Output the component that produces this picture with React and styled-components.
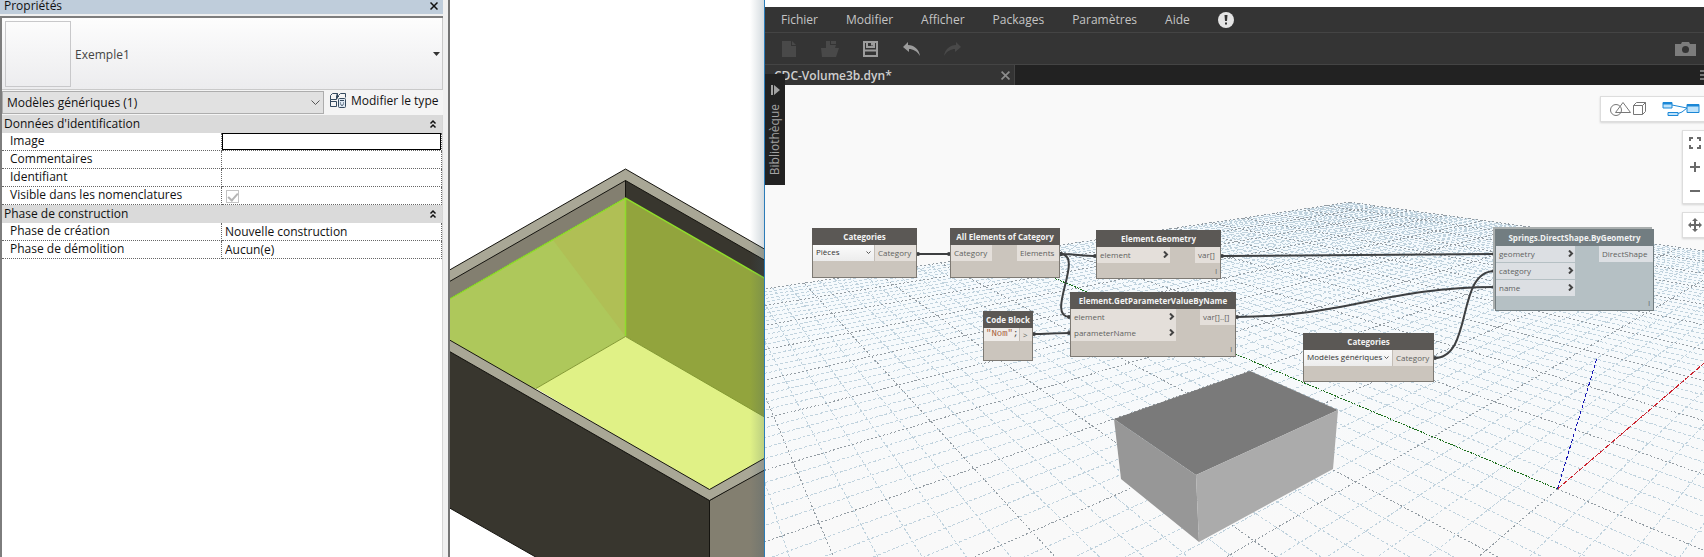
import React from "react";
import styled, { createGlobalStyle } from "styled-components";

const GlobalStyle = createGlobalStyle`
  * {
    box-sizing: border-box;
  }
  body {
    margin: 0;
    background: #fff;
    font-family: "Open Sans", "Noto Sans", sans-serif;
    overflow: hidden;
  }
  button, input, select {
    font: inherit;
    color: inherit;
    margin: 0;
    padding: 0;
    border: 0;
    border-radius: 0;
    background: none;
  }
  svg {
    display: block;
  }
`;

const Desktop = styled.div`
  display: grid;
  grid-template-columns: 450px 314px minmax(0, 1fr);
  min-height: 100vh;
`;

/* ---------- properties palette ---------- */

const Palette = styled.aside`
  display: flex;
  flex-direction: column;
  padding-right: 5px;
  background: #f0f0f0;
  border-right: 2px solid #747474;
  font-size: 12px;
  color: #111;
`;

const PaletteTitle = styled.header`
  display: flex;
  justify-content: space-between;
  align-items: center;
  height: 14px;
  margin-bottom: 2px;
  padding: 0 5px 2px 4px;
  background: #bfcddb;
  line-height: 12px;

  h2 {
    margin: 0;
    font-size: 12px;
    font-weight: 400;
  }
`;

const Frame = styled.div`
  flex: 1;
  background: #fff;
  border: solid #7d7d7d;
  border-width: 2px 0 0 2px;
  box-shadow: inset -1px 0 #d5d5d5;
`;

const TypeSelector = styled.button`
  display: flex;
  align-items: center;
  gap: 4px;
  width: 100%;
  height: 72px;
  padding: 1px 2px 0 3px;
  background: linear-gradient(#fdfdfd, #ececee);
  border: solid #c9c9c9;
  border-width: 0 1px 1px 0;
  color: #444;
  text-align: left;

  span {
    flex: 1;
  }
`;

const Thumb = styled.i`
  width: 66px;
  height: 66px;
  border: 1px solid #c8c8ca;
`;

const FilterRow = styled.div`
  display: flex;
  align-items: center;
  height: 25px;
  background: #f4f4f4;
`;

const SelectWrap = styled.div`
  display: grid;
  align-items: center;
  flex: 1;

  select, svg {
    grid-area: 1 / 1;
  }
  select {
    appearance: none;
    width: 100%;
    height: 23px;
    padding-left: 4px;
    background: #e1e1e1;
    border: 1px solid #adadad;
  }
  svg {
    justify-self: end;
    margin-right: 4px;
    pointer-events: none;
  }
`;

const EditType = styled.button`
  display: flex;
  align-items: flex-start;
  gap: 4px;
  width: 119px;
  height: 21px;
  padding-left: 6px;
  white-space: nowrap;
`;

const PropTable = styled.table`
  width: 440px;
  border-collapse: separate;
  border-spacing: 0;
  table-layout: fixed;

  th, td {
    height: 18px;
    padding: 0;
    font-weight: 400;
    line-height: 16px;
    text-align: left;
  }
`;

const GroupButton = styled.button`
  display: flex;
  justify-content: space-between;
  align-items: center;
  width: 100%;
  height: 18px;
  padding: 0 5px 0 2px;
  background: #dadada;
`;

const PropRow = styled.tr`
  th {
    padding-left: 8px;
  }
  th, td {
    border: 1px dotted #666;
    border-width: 0 1px 1px 0;
    vertical-align: top;
  }
`;

const PropInput = styled.input`
  display: block;
  width: 100%;
  height: 17px;
  padding: 0 0 1px 3px;
  outline: ${({ $active }) => ($active ? "1px solid #000" : "none")};
  outline-offset: ${({ $active }) => ($active ? "-1px" : "0")};
`;

const PropCheck = styled.input`
  appearance: none;
  display: block;
  width: 13px;
  height: 13px;
  margin: 3px 0 0 4px;
  border: 1px solid #c4c4c4;

  &:checked::after {
    content: "";
    display: block;
    width: 4px;
    height: 8px;
    margin: 0 auto;
    border: solid #b5b5b5;
    border-width: 0 2px 2px 0;
    transform: rotate(42deg);
  }
`;

const groups = [
  {
    title: "Données d'identification",
    rows: [
      { id: "image", label: "Image", value: "", active: true },
      { id: "comments", label: "Commentaires", value: "" },
      { id: "mark", label: "Identifiant", value: "" },
      { id: "visible", label: "Visible dans les nomenclatures", check: true },
    ],
  },
  {
    title: "Phase de construction",
    rows: [
      { id: "created", label: "Phase de création", value: "Nouvelle construction" },
      { id: "demolished", label: "Phase de démolition", value: "Aucun(e)" },
    ],
  },
];

const CloseIcon = ({ size = 8, width = 2 }) => (
  <svg width={size} height={size} viewBox="0 0 8 8" stroke="currentColor" strokeWidth={width}>
    <path d="M.5 .5l7 7M7.5 .5l-7 7" />
  </svg>
);

const Collapse = () => (
  <svg width="8" height="10" viewBox="0 0 8 10" fill="none" stroke="#111" strokeWidth="1.5">
    <path d="M1.5 4.5L4 2l2.500 2.500M1.500 8.500L4 6l2.500 2.500" />
  </svg>
);

const EditTypeIcon = () => (
  <svg width="17" height="17" viewBox="0 0 17 17" fill="none" stroke="#34495e">
    <path d="M.5 3.500l2-2h5l-1 2v4h-6zM.5 9.500h6v5h-6zM8.500 5V3.500l2-2h5v4M.5 7.500v3M7.500 1.500v5" />
    <rect x="8.500" y="6.500" width="7" height="9" rx="1" fill="#dfe9f3" />
    <path d="M10 8.500h4M10 11h1M13 11h1M10.500 12.500l1.500 1 1.500-1" />
  </svg>
);

const Properties = () => (
  <Palette>
    <PaletteTitle>
      <h2>Propriétés</h2>
      <button aria-label="Fermer">
        <CloseIcon width={1.5} />
      </button>
    </PaletteTitle>
    <Frame>
      <TypeSelector>
        <Thumb />
        <span>Exemple1</span>
        <svg width="7" height="4" viewBox="0 0 7 4">
          <path d="M0 0h7L3.500 4z" fill="#333" />
        </svg>
      </TypeSelector>
      <FilterRow>
        <SelectWrap>
          <select aria-label="Filtre">
            <option>Modèles génériques (1)</option>
          </select>
          <svg width="9" height="6" viewBox="0 0 9 6" fill="none" stroke="#555">
            <path d="M.5 .5l4 4 4-4" />
          </svg>
        </SelectWrap>
        <EditType>
          <EditTypeIcon />
          Modifier le type
        </EditType>
      </FilterRow>
      <PropTable>
        {groups.map((g) => (
          <tbody key={g.title}>
            <tr>
              <th colSpan="2">
                <GroupButton>
                  {g.title}
                  <Collapse />
                </GroupButton>
              </th>
            </tr>
            {g.rows.map((r) => (
              <PropRow key={r.id}>
                <th>
                  <label htmlFor={r.id}>{r.label}</label>
                </th>
                <td>
                  {r.check ? (
                    <PropCheck id={r.id} type="checkbox" defaultChecked disabled />
                  ) : (
                    <PropInput id={r.id} type="text" defaultValue={r.value} $active={r.active} />
                  )}
                </td>
              </PropRow>
            ))}
          </tbody>
        ))}
      </PropTable>
    </Frame>
  </Palette>
);

/* ---------- Revit 3D view ---------- */

const View3D = styled.main`
  position: relative;
  overflow: hidden;
  background: #fff;

  svg {
    position: absolute;
    inset: 0;
  }
  &::after {
    content: "";
    position: absolute;
    inset: 0 0 0 auto;
    width: 14px;
    background: linear-gradient(to right, rgba(60, 90, 110, 0), rgba(60, 90, 110, 0.22));
  }
`;

const Room = () => (
  <View3D>
    <svg width="100%" height="100%">
      <g stroke="#15140f" strokeLinejoin="round">
        <path d="M-10 275.500L175.500 169 330 258v40L175.500 198-10 305z" fill="#a9a796" />
        <path d="M-10 287L175.500 180.500V198L-10 304.500z" fill="#837f70" />
        <path d="M175.500 180.500L330 269v18L175.500 198z" fill="#38362e" />
      </g>
      <path d="M-10 304.500L175.500 198v138.500L80 392-10 345z" fill="#aec85b" />
      <path d="M103 240l72.500-42v138.500z" fill="#b0bf55" />
      <path d="M175.500 198L330 287v140L175.500 336.500z" fill="#92a43d" />
      <path d="M175.500 336.500L330 426v40l-71 25L86 388.500z" fill="#e0f186" />
      <path d="M86 388.500l89.500-52L330 426" fill="none" stroke="#849a32" />
      <path d="M-10 304.500L175.500 198 330 287M175.500 198v138" fill="none" stroke="#8fdc2c" strokeWidth="1.500" />
      <g stroke="#15140f" strokeLinejoin="round">
        <path d="M-10 346L259.500 500.500V656L-10 502.500z" fill="#38362e" />
        <path d="M259.500 500.500L330 460v140h-70.500z" fill="#837f70" />
        <path d="M-10 334.500l269.500 155L330 449.500v12l-70.500 39L-10 346z" fill="#a9a796" />
      </g>
    </svg>
  </View3D>
);

/* ---------- Dynamo window ---------- */

const DynamoWindow = styled.section`
  position: relative;
  display: flex;
  flex-direction: column;
  padding-top: 7px;
  border-left: 1px solid #2b7cb8;
  background: #fff;
  overflow: hidden;
`;

const MenuBar = styled.nav`
  display: flex;
  align-items: center;
  gap: 28px;
  height: 26px;
  padding: 0 16px;
  background: #343434;
  border-bottom: 1px solid #444;
  color: #c4c4c4;
  font-size: 12px;
`;

const Toolbar = styled.div`
  display: flex;
  align-items: center;
  height: 32px;
  padding: 0 8px 0 3px;
  background: #343434;
  border-bottom: 1px solid #444;
`;

const ToolButton = styled.button`
  display: flex;
  justify-content: center;
  width: 41px;
  color: ${({ $off }) => ($off ? "#494949" : "#9c9c9c")};

  &:last-child {
    width: auto;
    margin-left: auto;
    color: #7c7c7c;
  }
`;

const TabBar = styled.div`
  display: flex;
  justify-content: space-between;
  align-items: center;
  height: 20px;
  background: #222;
  color: #777;
`;

const Tab = styled.div`
  display: flex;
  justify-content: space-between;
  align-items: center;
  width: 250px;
  height: 20px;
  padding: 0 4px 0 9px;
  background: #343434;
  border-right: 1px solid #444;
  color: #8c8c8c;
  font-size: 12px;
  font-weight: 600;

  span {
    color: #cfcfcf;
  }
`;

const Library = styled.button`
  position: absolute;
  top: 74px;
  left: 0;
  display: flex;
  flex-direction: column;
  align-items: center;
  gap: 9px;
  width: 20px;
  height: 111px;
  padding-top: 11px;
  background: #222;
  color: #a2a2a2;
  font-size: 12px;
  line-height: 16px;

  span {
    writing-mode: vertical-rl;
    transform: rotate(180deg);
  }
`;

const Canvas = styled.div`
  position: relative;
  flex: 1;
  background: #f9f9f9;
  overflow: hidden;
`;

const Layer = styled.svg`
  position: absolute;
  inset: 0;
`;

const Node = styled.article`
  position: absolute;
  left: ${({ $x }) => $x}px;
  top: ${({ $y }) => $y}px;
  display: flex;
  flex-direction: column;
  width: ${({ $w }) => $w}px;
  height: ${({ $h }) => $h}px;
  background: ${({ $cool }) => ($cool ? "#b5c0c4" : "#cbc5bd")};
  border: 1px solid ${({ $cool }) => ($cool ? "#727d81" : "#7d7973")};
  box-shadow: ${({ $cool }) => ($cool ? "-2px -2px #a9aeae" : "none")};
  color: #5f5f5f;
  font-size: 8px;

  h3 {
    margin: -1px -1px 0;
    background: ${({ $cool }) => ($cool ? "#727d81" : "#5b5855")};
    color: #f3f3f3;
    font-size: 8px;
    font-weight: 700;
    line-height: 17px;
    text-align: center;
    white-space: nowrap;
  }
`;

const NodeBody = styled.div`
  display: flex;
  justify-content: space-between;
  align-items: flex-start;
`;

const Ports = styled.div`
  display: flex;
  flex-direction: column;
  gap: ${({ $gap }) => $gap || 0}px;
  width: ${({ $w }) => $w}px;
`;

const Port = styled.div`
  display: flex;
  justify-content: space-between;
  align-items: center;
  height: ${({ $short }) => ($short ? 13 : 16)}px;
  padding: 0 1px 1px 3px;
  background: ${({ $cool }) => ($cool ? "#dcdfe3" : "#e4dfda")};
  white-space: nowrap;
`;

const Lacing = styled.small`
  margin: auto 3px 1px auto;
  font-size: 7px;
  line-height: 10px;
`;

const NodeSelect = styled(SelectWrap)`
  flex: none;
  width: ${({ $w }) => $w}px;
  color: #333;

  select {
    height: 16px;
    padding: 0 0 2px 3px;
    background: linear-gradient(#fbfbfb, #ececec);
    border: 0;
    border-right: 1px solid #c4beb7;
    line-height: 14px;
  }
`;

const Code = styled.code`
  flex: 1;
  height: 13px;
  padding-left: 2px;
  background: #efece9;
  border-right: 1px solid #c4beb7;
  color: #444;
  font: 9px/12px "Liberation Mono", monospace;

  span {
    color: #a8623c;
  }
`;

const Overlay = styled.div`
  position: absolute;
  top: 11px;
  right: -4px;
  display: flex;
  flex-direction: column;
  align-items: flex-end;
  gap: 8px;
`;

const Group = styled.div`
  display: flex;
  flex-direction: ${({ $column }) => ($column ? "column" : "row")};
  background: #fff;
  border: 1px solid #ddd;
  box-shadow: 0 1px 2px rgba(0, 0, 0, 0.15);
`;

const ViewButton = styled.button`
  display: flex;
  align-items: center;
  justify-content: center;
  width: ${({ $w }) => $w || 24}px;
  height: 24px;
  color: #6a6a6a;

  & + & {
    border-left: ${({ $w }) => ($w ? "1px solid #d5d5d5" : "0")};
  }
`;

// ground plane, seen in perspective: origin and the vanishing points of both axes
const origin = { x: 792.5, y: 404 };
const vanishY = { x: -124, y: 20 };
const vanishX = { x: 1240, y: 20 };
const ky = 0.0314;
const kx = 0.0276;
const extent = 50;

const project = (u, v) => {
  const a = ky * u;
  const b = kx * v;
  const w = 1 + a + b;
  const x = (origin.x + a * vanishY.x + b * vanishX.x) / w;
  const y = (origin.y + a * vanishY.y + b * vanishX.y) / w;
  return `${x.toFixed(1)} ${y.toFixed(1)}`;
};

const gridPath = (major) => {
  let d = "";
  for (let i = -extent; i <= extent; i++) {
    if ((i % 5 === 0) !== major || i === 0) continue;
    // keep only what lies in front of the camera
    const v0 = Math.max(-extent, (-0.7 - ky * i) / kx);
    const u0 = Math.max(-extent, (-0.7 - kx * i) / ky);
    d += `M${project(i, extent)}L${project(i, v0)}`;
    d += `M${project(extent, i)}L${project(u0, i)}`;
  }
  return d;
};

const Ground = () => (
  <Layer width="100%" height="100%">
    <defs>
      <linearGradient id="haze" gradientUnits="userSpaceOnUse" x1="0" y1="110" x2="0" y2="440">
        <stop offset="0" stopColor="#f4fafe" />
        <stop offset="1" stopColor="#f9f9f9" />
      </linearGradient>
    </defs>
    <path
      d={`M${project(50, 50)}L${project(50, -40)}L-200 900L1400 900L${project(-30, 50)}z`}
      fill="url(#haze)"
    />
    <g fill="none" shapeRendering="crispEdges">
      <path d={gridPath(false)} stroke="#c1d3de" strokeDasharray="3 2" />
      <path d={gridPath(true)} stroke="#949da4" strokeDasharray="2 2" />
      <path
        d={`M${project(0, 0)}L${project(0, -22)}M${project(0, 0)}L${project(-18, 0)}`}
        stroke="#949da4"
        strokeDasharray="2 2"
      />
      <path d={`M${project(0, 0)}L${project(50, 0)}`} stroke="#1d701d" strokeDasharray="2 1" />
      <path d={`M${project(0, 0)}L${project(0, 50)}`} stroke="#cc2430" strokeDasharray="6 1" />
      <path d="M792.500 404L832 273" stroke="#1414b4" strokeDasharray="4 2" />
    </g>
    <path d="M349 334l136-48 88 39-142 65z" fill="#7a7a7a" />
    <path d="M349 334l82 56 3 67-78-63z" fill="#979797" />
    <path d="M431 390l142-65-5 59-134 73z" fill="#ababab" />
  </Layer>
);

const wires = [
  [152, 169, 185, 169, 12],
  [295, 169, 331, 171, 12],
  [295, 169, 305, 232, 26],
  [268, 249, 305, 248, 12],
  [456, 171, 730, 169, 90],
  [471, 232, 730, 202, 110],
  [669, 273, 730, 186, 40],
];

const Wires = () => (
  <Layer width="100%" height="100%" fill="none" stroke="#3d3f41" strokeWidth="2">
    {wires.map(([x1, y1, x2, y2, c], i) => (
      <g key={i}>
        <path d={`M${x1} ${y1}C${x1 + c} ${y1} ${x2 - c} ${y2} ${x2} ${y2}`} />
        <circle cx={x1 + 1} cy={y1} r="1" />
        <circle cx={x2 - 1} cy={y2} r="1" />
      </g>
    ))}
  </Layer>
);

const PortArrow = () => (
  <svg width="6" height="7" viewBox="0 0 6 7" fill="none" stroke="#444" strokeWidth="2">
    <path d="M1 .5l3 3-3 3" />
  </svg>
);

const FnNode = ({ title, inputs, output, inW, outW, arrows, lacing, gap, ...box }) => (
  <Node {...box}>
    <h3>{title}</h3>
    <NodeBody>
      <Ports $w={inW} $gap={gap}>
        {inputs.map((name) => (
          <Port key={name} $cool={box.$cool}>
            {name}
            {arrows && <PortArrow />}
          </Port>
        ))}
      </Ports>
      <Ports $w={outW}>
        <Port $cool={box.$cool}>{output}</Port>
      </Ports>
    </NodeBody>
    {lacing && <Lacing>l</Lacing>}
  </Node>
);

const CategoryNode = ({ value, selectW, ...box }) => (
  <Node {...box}>
    <h3>Categories</h3>
    <NodeBody>
      <NodeSelect $w={selectW}>
        <select aria-label="Catégorie">
          <option>{value}</option>
        </select>
        <svg width="5" height="4" viewBox="0 0 5 4" fill="none" stroke="#555">
          <path d="M.5 .5l2 2 2-2" />
        </svg>
      </NodeSelect>
      <Ports $w={box.$w - selectW - 2}>
        <Port>Category</Port>
      </Ports>
    </NodeBody>
  </Node>
);

const Graph = () => (
  <>
    <CategoryNode value="Pièces" selectW={62} $x={47} $y={143} $w={105} $h={50} />
    <FnNode
      title="All Elements of Category"
      inputs={["Category"]}
      output="Elements"
      inW={41}
      outW={42}
      $x={185}
      $y={143}
      $w={110}
      $h={50}
    />
    <FnNode
      title="Element.Geometry"
      inputs={["element"]}
      output="var[]"
      inW={73}
      outW={25}
      arrows
      lacing
      $x={331}
      $y={145}
      $w={125}
      $h={49}
    />
    <FnNode
      title="Element.GetParameterValueByName"
      inputs={["element", "parameterName"]}
      output="var[]..[]"
      inW={105}
      outW={35}
      arrows
      lacing
      $x={305}
      $y={207}
      $w={166}
      $h={65}
    />
    <Node $x={218} $y={226} $w={50} $h={50}>
      <h3>Code Block</h3>
      <NodeBody>
        <Code>
          <span>"Nom"</span>;
        </Code>
        <Ports $w={12}>
          <Port $short>&gt;</Port>
        </Ports>
      </NodeBody>
    </Node>
    <FnNode
      title="Springs.DirectShape.ByGeometry"
      inputs={["geometry", "category", "name"]}
      output="DirectShape"
      inW={79}
      outW={54}
      arrows
      lacing
      gap={1}
      $cool
      $x={730}
      $y={144}
      $w={159}
      $h={82}
    />
    <CategoryNode value="Modèles génériques" selectW={89} $x={538} $y={248} $w={131} $h={49} />
  </>
);

const ViewControls = () => (
  <Overlay>
    <Group>
      <ViewButton $w={53} aria-label="Géométrie">
        <svg width="38" height="16" viewBox="0 0 38 16" fill="none" stroke="#777">
          <circle cx="7" cy="9" r="5.500" />
          <path d="M14 1.500L21.500 11.500H6.500zM24.500 4.500h9v9h-9zM24.500 4.500l3-3h9v9l-3 3M33.500 4.500l3-3" />
        </svg>
      </ViewButton>
      <ViewButton $w={53} aria-label="Graphe">
        <svg width="38" height="16" viewBox="0 0 38 16" fill="#bfe3fb" stroke="#1b87d6">
          <path d="M10 4l15 3M16 12.500L20 11l5-4" fill="none" />
          <path d="M1 1.500h9v5.500H1zM6 11.500h10v3H6zM25 3.500h12v8H25z" />
          <path d="M1 2.500h9M25 4.500h12" strokeWidth="2" />
        </svg>
      </ViewButton>
    </Group>
    <Group $column>
      <ViewButton aria-label="Ajuster">
        <svg width="12" height="12" viewBox="0 0 12 12" fill="none" stroke="currentColor" strokeWidth="2">
          <path d="M1 4V1h3M8 1h3v3M11 8v3H8M4 11H1V8" />
        </svg>
      </ViewButton>
      <ViewButton aria-label="Zoom avant">
        <svg width="10" height="10" viewBox="0 0 10 10" stroke="currentColor" strokeWidth="2">
          <path d="M5 0v10M0 5h10" />
        </svg>
      </ViewButton>
      <ViewButton aria-label="Zoom arrière">
        <svg width="10" height="2" viewBox="0 0 10 2" fill="currentColor">
          <path d="M0 0h10v2H0z" />
        </svg>
      </ViewButton>
    </Group>
    <Group>
      <ViewButton aria-label="Panoramique">
        <svg width="14" height="14" viewBox="0 0 14 14" fill="currentColor">
          <path d="M7 0l3 3H8v3h3V4l3 3-3 3V8H8v3h2l-3 3-3-3h2V8H3v2L0 7l3-3v2h3V3H4z" />
        </svg>
      </ViewButton>
    </Group>
  </Overlay>
);

const menus = ["Fichier", "Modifier", "Afficher", "Packages", "Paramètres", "Aide"];

const Dynamo = () => (
  <DynamoWindow>
    <MenuBar>
      {menus.map((m) => (
        <button key={m}>{m}</button>
      ))}
      <button aria-label="Notifications">
        <svg width="16" height="16" viewBox="0 0 16 16">
          <circle cx="8" cy="8" r="8" fill="#e4e4e4" />
          <path d="M6.500 3h3l-.500 6h-2zM7 10.500h2v2H7z" fill="#333" />
        </svg>
      </button>
    </MenuBar>
    <Toolbar>
      <ToolButton $off aria-label="Nouveau">
        <svg width="14" height="16" viewBox="0 0 14 16" fill="currentColor">
          <path d="M0 0h9v5h5v11H0zM10 0l4 4h-4z" />
        </svg>
      </ToolButton>
      <ToolButton $off aria-label="Ouvrir">
        <svg width="18" height="16" viewBox="0 0 18 16" fill="currentColor">
          <path d="M5 0h4v4h6l-1 3h4l-3 9H1L0 7h5zM10 0h5v3h-5z" />
        </svg>
      </ToolButton>
      <ToolButton aria-label="Enregistrer">
        <svg width="15" height="16" viewBox="0 0 15 16" fill="none" stroke="currentColor" strokeWidth="2">
          <path d="M1 1h13v14H1zM4 1v5h7V1M1 9.500h13M9 2v2.500" />
        </svg>
      </ToolButton>
      <ToolButton aria-label="Annuler">
        <svg width="17" height="14" viewBox="0 0 17 14" fill="currentColor">
          <path d="M0 5l5-5v3c6 0 11 4 12 11-3-5-7-7-11-7v3z" />
        </svg>
      </ToolButton>
      <ToolButton $off aria-label="Rétablir">
        <svg width="17" height="14" viewBox="0 0 17 14" fill="currentColor">
          <path d="M17 5l-5-5v3C6 3 1 7 0 14c3-5 7-7 11-7v3z" />
        </svg>
      </ToolButton>
      <ToolButton aria-label="Exporter une image">
        <svg width="21" height="14" viewBox="0 0 21 14">
          <path d="M0 2h6l1-2h7l1 2h6v12H0z" fill="currentColor" />
          <circle cx="10.500" cy="7.500" r="3.500" fill="#333" />
        </svg>
      </ToolButton>
    </Toolbar>
    <TabBar>
      <Tab>
        <span>CDC-Volume3b.dyn*</span>
        <button aria-label="Fermer l'onglet">
          <CloseIcon size={9} width={1.5} />
        </button>
      </Tab>
      <button aria-label="Onglets">
        <svg width="4" height="10" viewBox="0 0 4 10" stroke="currentColor" strokeWidth="2">
          <path d="M0 1h4M0 5h4M0 9h4" />
        </svg>
      </button>
    </TabBar>
    <Canvas>
      <Ground />
      <Wires />
      <Graph />
      <ViewControls />
    </Canvas>
    <Library>
      <svg width="9" height="10" viewBox="0 0 9 10" fill="currentColor">
        <path d="M0 0h2v10H0zM3 0l6 5-6 5z" />
      </svg>
      <span>Bibliothèque</span>
    </Library>
  </DynamoWindow>
);

const App = () => (
  <>
    <GlobalStyle />
    <Desktop>
      <Properties />
      <Room />
      <Dynamo />
    </Desktop>
  </>
);

export default App;
